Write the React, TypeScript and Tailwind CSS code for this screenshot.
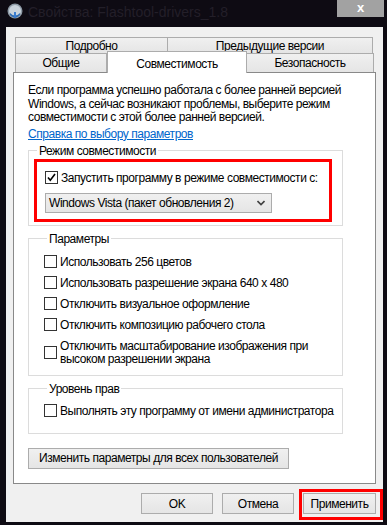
const paramRows = [
  "Использовать 256 цветов",
  "Использовать разрешение экрана 640 x 480",
  "Отключить визуальное оформление",
  "Отключить композицию рабочего стола",
];

function CheckBox({ checked = false }: { checked?: boolean }) {
  return (
    <span className="w-[13px] h-[13px] shrink-0 border border-[#333333] bg-white flex items-center justify-center">
      {checked && (
        <svg width="11" height="11" viewBox="0 0 11 11">
          <path d="M2 5.5 L4.3 8.3 L9 2" fill="none" stroke="#000" strokeWidth="1.6" />
        </svg>
      )}
    </span>
  );
}

function Btn({ label, width }: { label: string; width: string }) {
  return (
    <div
      className={`${width} h-[21px] flex items-center justify-center border border-[#acacac] bg-gradient-to-b from-[#f0f0f0] to-[#e5e5e5] text-black`}
    >
      {label}
    </div>
  );
}

export default function App() {
  return (
    <div className="w-[387px] h-[525px] overflow-hidden bg-[#0e0b13] font-['Liberation_Sans',Arial,sans-serif] text-[12px] tracking-[-0.45px] text-black">
      {/* Title bar */}
      <div className="relative h-[27px] flex items-start tracking-normal">
        <svg className="ml-[7px] mt-[3px]" width="16" height="17" viewBox="0 0 16 17">
          <circle cx="8" cy="8" r="7.5" fill="#8d9aa6" />
          <circle cx="8" cy="8" r="6" fill="#c9d3dc" />
          <path d="M3 10 Q8 15 13 10 L13 12 Q8 17 3 12 Z" fill="#2f6db5" />
          <rect x="7" y="9" width="2" height="6" fill="#3b7dd0" />
        </svg>
        <span className="ml-[5px] mt-[4px] text-[14px] leading-[17px] text-[#231f29]">
          Свойства: Flashtool-drivers_1.8
        </span>
        <div className="absolute right-[3px] top-0 w-[47px] h-[17px] bg-[#a2a2a2] flex items-center justify-center">
          <span className="text-white font-bold text-[13px] leading-none -mt-[2px]">x</span>
        </div>
      </div>

      {/* Dialog body */}
      <div className="ml-[6px] w-[377px] h-[495px] bg-[#f0f0f0] pt-[10px] px-[7px]">
        {/* Tabs */}
        <div className="ml-[2px] flex h-[16px]">
          <div className="w-[153px] border border-b-0 border-[#acacac] bg-gradient-to-b from-[#f0f0f0] to-[#e5e5e5] flex items-center justify-center">
            Подробно
          </div>
          <div className="w-[205px] border border-b-0 border-l-0 border-[#acacac] bg-gradient-to-b from-[#f0f0f0] to-[#e5e5e5] flex items-center justify-center">
            Предыдущие версии
          </div>
        </div>
        <div className="ml-[2px] flex h-[19px] items-start">
          <div className="w-[92px] h-[19px] border border-b-0 border-[#acacac] bg-gradient-to-b from-[#f0f0f0] to-[#e5e5e5] flex items-center justify-center">
            Общие
          </div>
          <div className="relative z-10 w-[140px] h-[22px] -mt-[2px] border border-b-0 border-[#acacac] bg-white flex items-start justify-center pt-[3px]">
            Совместимость
          </div>
          <div className="w-[127px] h-[19px] border border-b-0 border-l-0 border-[#acacac] bg-gradient-to-b from-[#f0f0f0] to-[#e5e5e5] flex items-center justify-center">
            Безопасность
          </div>
        </div>

        {/* Panel */}
        <div className="w-[363px] h-[412px] border border-[#898989] bg-white pl-[14px] pt-[11px]">
          <p className="leading-[13.5px] w-[320px]">
            Если программа успешно работала с более ранней версией
            <br />
            Windows, а сейчас возникают проблемы, выберите режим
            <br />
            совместимости с этой более ранней версией.
          </p>
          <p className="mt-[2px] leading-[14px] text-[#0066cc] underline">Справка по выбору параметров</p>

          <fieldset className="mt-[3px] w-[315px] border border-[#dcdcdc] px-[5px] pb-[3px]">
            <legend className="ml-[3px] px-[2px] leading-[14px]">Режим совместимости</legend>
            <div className="mt-[1px] w-[298px] border-[3px] border-[#ff0000] pl-[8px] pt-[9px] pb-[6px]">
              <div className="flex items-center gap-[3px] h-[14px] whitespace-nowrap">
                <CheckBox checked />
                <span>Запустить программу в режиме совместимости с:</span>
              </div>
              <div className="mt-[8px] w-[227px] h-[20px] border border-[#acacac] bg-gradient-to-b from-[#f0f0f0] to-[#e5e5e5] flex items-center justify-between pl-[3px] pr-[6px]">
                <span>Windows Vista (пакет обновления 2)</span>
                <svg width="8" height="6" viewBox="0 0 8 6">
                  <path d="M0.5 1 L4 4.5 L7.5 1" fill="none" stroke="#404040" strokeWidth="1.6" />
                </svg>
              </div>
            </div>
          </fieldset>

          <fieldset className="mt-[6px] w-[315px] border border-[#dcdcdc] pl-[15px] pb-[9px]">
            <legend className="ml-[3px] px-[2px] leading-[14px]">Параметры</legend>
            <div className="mt-[9px] flex flex-col gap-[7px]">
              {paramRows.map((row) => (
                <div key={row} className="flex items-center gap-[3px] h-[14px]">
                  <CheckBox />
                  <span>{row}</span>
                </div>
              ))}
              <div className="mt-[1px] flex items-center gap-[3px]">
                <CheckBox />
                <span className="leading-[13px]">
                  Отключить масштабирование изображения при
                  <br />
                  высоком разрешении экрана
                </span>
              </div>
            </div>
          </fieldset>

          <fieldset className="mt-[6px] w-[315px] border border-[#dcdcdc] pl-[15px] pb-[15px]">
            <legend className="ml-[3px] px-[2px] leading-[14px]">Уровень прав</legend>
            <div className="mt-[8px] flex items-center gap-[3px] h-[14px] whitespace-nowrap">
              <CheckBox />
              <span>Выполнять эту программу от имени администратора</span>
            </div>
          </fieldset>

          <div className="mt-[14px]">
            <Btn label="Изменить параметры для всех пользователей" width="w-[261px]" />
          </div>
        </div>

        {/* Bottom buttons */}
        <div className="mt-[9px] flex justify-end gap-[9px]">
          <Btn label="OK" width="w-[72px]" />
          <Btn label="Отмена" width="w-[72px]" />
          <div className="relative">
            <Btn label="Применить" width="w-[73px]" />
            <div className="absolute -left-[4px] -top-[4px] -right-[7px] -bottom-[6px] border-[3px] border-[#ff0000]" />
          </div>
        </div>
      </div>
    </div>
  );
}
